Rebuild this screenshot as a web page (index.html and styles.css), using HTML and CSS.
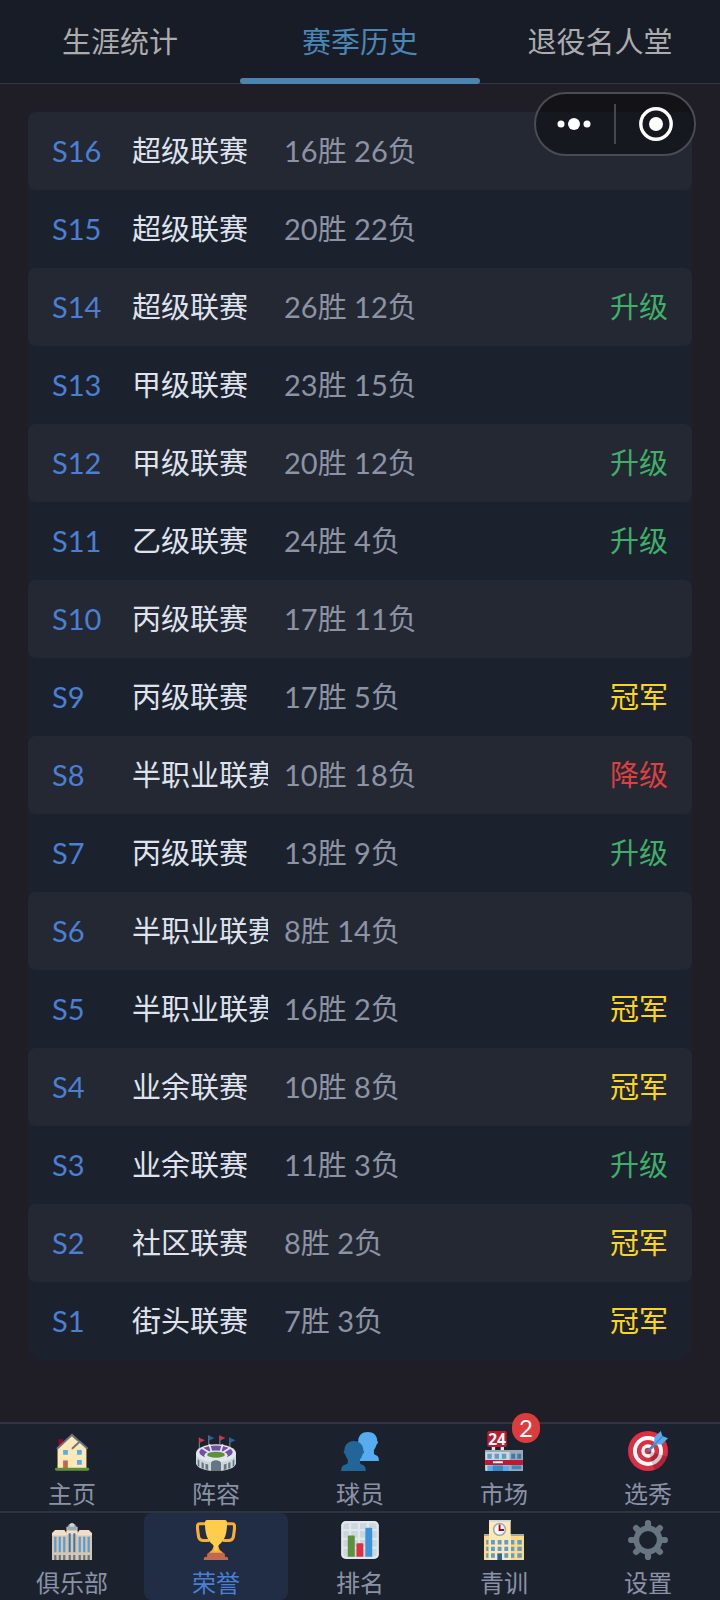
FILE: index.html
```html
<!DOCTYPE html>
<html lang="zh-CN">
<head>
  <meta charset="UTF-8">
  <meta name="viewport" content="width=device-width,initial-scale=1">
  <title>赛季历史</title>
  <link rel="stylesheet" href="styles.css">
</head>
<body>
  <nav class="tabs">
    <button class="tab">生涯统计</button>
    <button class="tab active">赛季历史</button>
    <button class="tab">退役名人堂</button>
  </nav>

  <div class="capsule">
    <button class="capsule-btn" aria-label="更多">
      <svg width="36" height="36" viewBox="0 0 36 36" fill="#fff"><circle cx="4" cy="18" r="3.5"/><circle cx="17" cy="18" r="6"/><circle cx="30" cy="18" r="3.5"/></svg>
    </button>
    <button class="capsule-btn" aria-label="关闭">
      <svg width="36" height="36" viewBox="0 0 36 36"><circle cx="19" cy="18" r="15.2" fill="none" stroke="#fff" stroke-width="3.4"/><circle cx="19" cy="18" r="7" fill="#fff"/></svg>
    </button>
  </div>

  <main>
    <table class="history">
      <tbody>
        <tr><td class="season">S16</td><td class="league">超级联赛</td><td class="record">16胜 26负</td><td></td></tr>
        <tr><td class="season">S15</td><td class="league">超级联赛</td><td class="record">20胜 22负</td><td></td></tr>
        <tr><td class="season">S14</td><td class="league">超级联赛</td><td class="record">26胜 12负</td><td class="up">升级</td></tr>
        <tr><td class="season">S13</td><td class="league">甲级联赛</td><td class="record">23胜 15负</td><td></td></tr>
        <tr><td class="season">S12</td><td class="league">甲级联赛</td><td class="record">20胜 12负</td><td class="up">升级</td></tr>
        <tr><td class="season">S11</td><td class="league">乙级联赛</td><td class="record">24胜 4负</td><td class="up">升级</td></tr>
        <tr><td class="season">S10</td><td class="league">丙级联赛</td><td class="record">17胜 11负</td><td></td></tr>
        <tr><td class="season">S9</td><td class="league">丙级联赛</td><td class="record">17胜 5负</td><td class="champion">冠军</td></tr>
        <tr><td class="season">S8</td><td class="league">半职业联赛</td><td class="record">10胜 18负</td><td class="down">降级</td></tr>
        <tr><td class="season">S7</td><td class="league">丙级联赛</td><td class="record">13胜 9负</td><td class="up">升级</td></tr>
        <tr><td class="season">S6</td><td class="league">半职业联赛</td><td class="record">8胜 14负</td><td></td></tr>
        <tr><td class="season">S5</td><td class="league">半职业联赛</td><td class="record">16胜 2负</td><td class="champion">冠军</td></tr>
        <tr><td class="season">S4</td><td class="league">业余联赛</td><td class="record">10胜 8负</td><td class="champion">冠军</td></tr>
        <tr><td class="season">S3</td><td class="league">业余联赛</td><td class="record">11胜 3负</td><td class="up">升级</td></tr>
        <tr><td class="season">S2</td><td class="league">社区联赛</td><td class="record">8胜 2负</td><td class="champion">冠军</td></tr>
        <tr><td class="season">S1</td><td class="league">街头联赛</td><td class="record">7胜 3负</td><td class="champion">冠军</td></tr>
      </tbody>
    </table>
  </main>

  <nav class="bottom-nav">
    <div class="nav-row">
      <button class="nav-item">
        <svg class="icon" viewBox="0 0 36 36">
          <path fill="#a0041e" d="M6 7.5h4V15H6z"/>
          <path fill="#ffe8b6" d="M5 16 18 4l5 5 2 .5 6 6.5v18H5z"/>
          <path fill="none" stroke="#66757f" stroke-width="1.8" stroke-linecap="round" d="M5 15.5 18 3.5l5.5 5M18.5 15.500 25 9.5l6.5 6"/>
          <path fill="#55acee" d="M10 17h4.3v4.3H10zM22.5 17h4.3v4.3h-4.3zM22.5 26h4.3v4.3h-4.3z"/>
          <path fill="#c1694f" d="M10 26.5h4.3V34H10z"/>
          <rect x="2.7" y="33" width="30.8" height="2.7" rx="1.3" fill="#5c913b"/>
        </svg>
        <span>主页</span>
      </button>
      <button class="nav-item">
        <svg class="icon" viewBox="0 0 36 36">
          <path fill="none" stroke="#8899a6" stroke-width=".8" d="M3 6v10M11.5 4v9M21.5 4v9M30.5 6v10"/>
          <path fill="#dd2e44" d="m3 6 5 2.3-5 2.4zM21.5 4l5 2.3-5 2.4z"/>
          <path fill="#226699" d="m11.5 4 5 2.3-5 2.4zM30.5 6l5 2.3-5 2.4z"/>
          <path fill="#ccd6dd" d="M0 20v9c0 4 8 7 18 7s18-3 18-7v-9z"/>
          <ellipse cx="18" cy="20" rx="18" ry="8" fill="#e1e8ed"/>
          <ellipse cx="18" cy="19" rx="15" ry="6" fill="#744eaa"/>
          <path stroke="#e1e8ed" stroke-width="1.6" d="m12 12 2 7M24 12l-2 7M5 15l8 5M31 15l-8 5"/>
          <ellipse cx="18" cy="22" rx="10.5" ry="4.500" fill="#e1e8ed"/>
          <ellipse cx="18" cy="21.3" rx="8" ry="2.7" fill="#5c913b"/>
          <path fill="#66757f" d="M13.5 36v-7c0-3.500 9-3.500 9 0v7zM1.500 25.500l1.500.8v6l-1.500-1zM5 28l2 .8V34l-2-.8zM8.500 29.500l2.500.6v5l-2.500-.6zM34.500 25.500l-1.500.8v6l1.500-1zM31 28l-2 .8V34l2-.8zM27.500 29.500l-2.500.6v5l2.500-.6z"/>
        </svg>
        <span>阵容</span>
      </button>
      <button class="nav-item">
        <svg class="icon" viewBox="0 0 36 36">
          <path fill="#55acee" d="M16.500 9C16.500 4 20 1 25 1s8.500 3 8.500 8c1 .3.800 2.700-.5 3-.5 2-1.300 3.700-2.500 5v3c0 1 1 1.500 2 1.800 2 .6 2.500 2.200 2.500 5.200H15V12z"/>
          <path fill="#269" d="M4 17.500c0-5 3.500-8.500 8.500-8.500s8.500 3.500 8.500 8.500c1 .3.800 2.700-.5 3-.5 2-1.300 3.700-2.500 5v3c0 1 1 1.500 2 1.800 2.500.7 3.200 2.700 3.200 5.700H1c0-3 .800-5 3.300-5.700 1-.3 2.700-.8 2.700-1.800v-3c-1.200-1.300-2-3-2.500-5-1.300-.3-1.500-2.700-.5-3z"/>
        </svg>
        <span>球员</span>
      </button>
      <button class="nav-item">
        <svg class="icon" viewBox="0 0 36 36">
          <rect x="3" y="0" width="17.500" height="14.500" rx="1.500" fill="#be1931"/>
          <text x="11.800" y="12.200" text-anchor="middle" class="sign">24</text>
          <path fill="#e1e8ed" d="M7 14.500h3V17H7zM15 14.500h3V17h-3z"/>
          <rect x="1" y="17" width="34" height="19" rx="1" fill="#ccd6dd"/>
          <path fill="#99aab5" d="M1 17h34v2H1zM23 19h12v17H23z"/>
          <path fill="#5c9dcc" d="M3 20.500h4V25H3zM9.500 20.500h4V25h-4zM16 20.500h4V25h-4z"/>
          <path fill="#3b78b0" d="M24.500 20.500h3.500V25h-3.500zM30 20.500h3.500V25H30z"/>
          <path fill="#be1931" d="M1 26h34v4.500H1z"/>
          <path fill="#fff" d="M8 27.200h9v1.800H8z"/>
          <path fill="#55acee" d="M3 31h20v5H3z"/>
          <path fill="#3b88c3" d="M8 31h9v5H8zM25 31h8.500v3.500H25z"/>
        </svg>
        <span>市场</span>
        <span class="badge">2</span>
      </button>
      <button class="nav-item">
        <svg class="icon" viewBox="0 0 36 36">
          <circle cx="18" cy="18" r="18" fill="#dd2e44"/>
          <circle cx="18" cy="18" r="13.500" fill="#fff"/>
          <circle cx="18" cy="18" r="10" fill="#dd2e44"/>
          <circle cx="18" cy="18" r="6" fill="#fff"/>
          <circle cx="18" cy="18" r="3" fill="#dd2e44"/>
          <path fill="#000" opacity=".2" d="m18 18 6 17c6-2 10-6 11.500-12z"/>
          <path fill="none" stroke="#4289c1" stroke-width="2.400" stroke-linecap="round" d="m18.500 17.500 9-9"/>
          <path fill="#55acee" d="m23 12.500 1-7L29.500 0l1.500 4.500 5 2-5.500 5.500z"/>
          <path fill="none" stroke="#3a87c2" d="m23.500 12.500 8-8"/>
        </svg>
        <span>选秀</span>
      </button>
    </div>
    <div class="nav-row">
      <button class="nav-item">
        <svg class="icon" viewBox="0 0 36 36">
          <path fill="#d5c5b5" d="M0 12l3-3h8l2 3V6h10v6l2-3h8l3 3v24H0z"/>
          <path fill="#f1dec9" d="M0 12l3-3h8l2 3v2H0zM23 12l2-3h8l3 3v2H23zM13 10h10v3H13z"/>
          <path fill="#99aab5" d="M14 7c0-5 8-5 8 0v2h-8z"/>
          <path fill="#ccd6dd" d="M16 4.500c0-2.500 4-2.500 4 0V6h-4z"/>
          <path fill="#5c9dcc" d="M2 15h2v14H2zM6 15h2v14H6zM10 15h2v14h-2zM24 15h2v14h-2zM28 15h2v14h-2zM32 15h2v14h-2z"/>
          <path fill="#3b78a8" d="M15 12h1.800v17H15zM19.200 12H21v17h-1.800z"/>
          <path fill="#66757f" d="M2 31.500h2V36H2zM6 31.500h2V36H6zM10 31.500h2V36h-2zM15 31.500h2V36h-2zM19 31.500h2V36h-2zM24 31.500h2V36h-2zM28 31.500h2V36h-2zM32 31.500h2V36h-2z"/>
        </svg>
        <span>俱乐部</span>
      </button>
      <button class="nav-item active">
        <svg class="icon" viewBox="0 0 36 36">
          <path fill="none" stroke="#ffac33" stroke-width="2.800" stroke-linejoin="round" d="M9 3.400H3.500C1 3.400 1.200 5 1.500 9l.8 6c.5 2.500 2 3.500 4.500 3.500H12M27 3.400h5.500c2.500 0 2.300 1.600 2 5.600l-.8 6c-.5 2.500-2 3.500-4.500 3.500H24"/>
          <path fill="#ffac33" d="M16 20h4c0 4 .5 7 4 9v2H12v-2c3.500-2 4-5 4-9z"/>
          <path fill="#ffcc4d" d="M8 2c0-1 1-2 2-2h16c1 0 2 1 2 2 0 12-3 17-7 20-1.500 1-1.500 3-1.500 6h-3c0-3 0-5-1.500-6C11 19 8 14 8 2z"/>
          <path fill="#c1694f" d="M10 31c0-1 1-1.500 2-1.500h12c1 0 2 .5 2 1.500v2h1c1.500 0 2 1 2 3H7c0-2 .5-3 2-3h1z"/>
        </svg>
        <span>荣誉</span>
      </button>
      <button class="nav-item">
        <svg class="icon" viewBox="0 0 36 36">
          <rect x="1" y="1" width="34" height="34" rx="4" fill="#e1e8ed"/>
          <path fill="#ccd6dd" d="M3 6q0-3 3-3h2v5H3zM10 3h6v5h-6zM18 3h6v5h-6zM26 3h4q3 0 3 3v2h-7zM3 10h5v6H3zM10 10h6v6h-6zM18 10h6v6h-6zM26 10h7v6h-7zM3 18h5v6H3zM10 18h6v6h-6zM18 18h6v6h-6zM26 18h7v6h-7zM3 26h5v7H6q-3 0-3-3zM10 26h6v7h-6zM18 26h6v7h-6zM26 26h7v4q0 3-3 3h-4z"/>
          <path fill="#5c913b" d="M7 33V15q0-1 1-1h4.300q1 0 1 1v18z"/>
          <path fill="#dd2e44" d="M14.800 33V22q0-1 1-1H20q1 0 1 1v11z"/>
          <path fill="#3b94d9" d="M22.800 33V8q0-1 1-1H28q1 0 1 1v25z"/>
        </svg>
        <span>排名</span>
      </button>
      <button class="nav-item">
        <svg class="icon" viewBox="0 0 36 36">
          <path fill="#ffe8b6" d="M0 13h36v23H0z"/>
          <path fill="#ffd983" d="M24 13h12v23H24zM0 13h4.500v23H0z"/>
          <path fill="#99aab5" d="M0 13h4.500v1.500H0zM24 13h12v1.500H24z"/>
          <path fill="#ffe8b6" d="M4.500 0H24v36H4.500z"/>
          <path fill="#ccd6dd" d="M4.500 0H24v1.500H4.500z"/>
          <circle cx="14" cy="8.500" r="5.300" fill="#f5f8fa" stroke="#99aab5" stroke-width="1.400"/>
          <path fill="none" stroke="#a0041e" stroke-width="1.600" d="M14 4v5h4"/>
          <path fill="#5c9dcc" d="M2 18h2v4H2zM6.300 18h3.500v4H6.300zM12.300 18h3.500v4h-3.500zM18.300 18h3.500v4h-3.500zM24.300 18h3v4h-3zM30 18h4v4h-4zM2 24h2v4H2zM6.300 24h3.500v4H6.300zM12.300 24h3.500v4h-3.500zM18.300 24h3.500v4h-3.500zM24.300 24h3v4h-3zM30 24h4v4h-4zM2 30h2v4H2zM6.300 30h3.500v4H6.300zM18.300 30h3.500v4h-3.500zM24.300 30h3v4h-3zM30 30h4v4h-4z"/>
          <path fill="#269" d="M12 30h4.200v6H12z"/>
        </svg>
        <span>青训</span>
      </button>
      <button class="nav-item">
        <svg class="icon" viewBox="0 0 36 36">
          <g stroke="#66757f" stroke-width="5.600" stroke-linecap="round">
            <path d="M18 2.800v5M18 28.200v5M2.800 18h5M28.200 18h5M7.300 7.300l3.500 3.500M25.200 25.200l3.500 3.500M28.700 7.300l-3.500 3.500M10.800 25.200l-3.500 3.500"/>
          </g>
          <circle cx="18" cy="18" r="10.500" fill="#1c222d" stroke="#66757f" stroke-width="5"/>
        </svg>
        <span>设置</span>
      </button>
    </div>
  </nav>
</body>
</html>
```
FILE: styles.css
```css
* { box-sizing: border-box; margin: 0; padding: 0; }
body {
  font: 29px/40px Lato, "Noto Sans CJK SC", sans-serif;
  background: #1f1e27;
  color: #dfe3ee;
  min-height: 100vh;
  display: flex;
  flex-direction: column;
}
button {
  font: inherit;
  color: inherit;
  background: none;
  border: none;
  cursor: pointer;
}
svg { display: block; }

/* top tabs */
.tabs {
  display: flex;
  height: 84px;
  background: #181c26;
  border-bottom: 1px solid #32343f;
}
.tab {
  flex: 1;
  position: relative;
  color: #acacae;
}
.tab.active { color: #4a86b6; }
.tab.active::after {
  content: "";
  position: absolute;
  left: 0;
  right: 0;
  bottom: -1px;
  height: 6px;
  border-radius: 3px;
  background: #4a84b0;
}

/* floating capsule */
.capsule {
  position: fixed;
  top: 92px;
  right: 24px;
  width: 162px;
  height: 64px;
  display: flex;
  align-items: center;
  border: 2px solid #4b4c53;
  border-radius: 32px;
  background: rgba(0,0,0,0.4);
}
.capsule-btn {
  flex: 1;
  height: 40px;
  display: flex;
  align-items: center;
  justify-content: center;
}
.capsule-btn + .capsule-btn { border-left: 2px solid #46474f; }

/* season list */
main {
  flex: 1;
  padding: 28px;
}
.history {
  display: block;
  background: #1c222d;
  border-radius: 8px 8px 16px 16px;
}
.history tbody { display: block; }
.history tr {
  display: flex;
  align-items: center;
  gap: 16px;
  height: 78px;
  padding: 0 24px;
  border-radius: 8px;
}
.history tr:nth-child(odd) { background: #242833; }
.history td { white-space: nowrap; }
.history .season { width: 64px; color: #4a80d4; }
.history .league { width: 136px; overflow: hidden; }
.history .record { flex: 1; color: #8c93a5; }
.up { color: #40b068; }
.down { color: #dc4040; }
.champion { color: #fcd51c; }

/* bottom navigation */
.bottom-nav {
  position: sticky;
  bottom: 0;
  background: #1c222d;
}
.nav-row {
  display: flex;
  border-top: 2px solid #30343e;
}
.nav-item {
  flex: 1;
  position: relative;
  display: flex;
  flex-direction: column;
  align-items: center;
  gap: 8px;
  padding: 7px 0 2px;
  border-radius: 8px;
  font-size: 24px;
  line-height: 30px;
  color: #8b92a8;
}
.nav-item.active { color: #4a80d4; background: #202d45; }
.icon { width: 40px; height: 40px; }
.sign {
  font: bold 14px "Noto Sans", sans-serif;
  fill: #fff;
}
.badge {
  position: absolute;
  top: -11px;
  left: 50%;
  margin-left: 8px;
  min-width: 28px;
  height: 30px;
  border-radius: 15px;
  background: #dc3c3e;
  color: #fff;
  font-size: 24px;
}
```
